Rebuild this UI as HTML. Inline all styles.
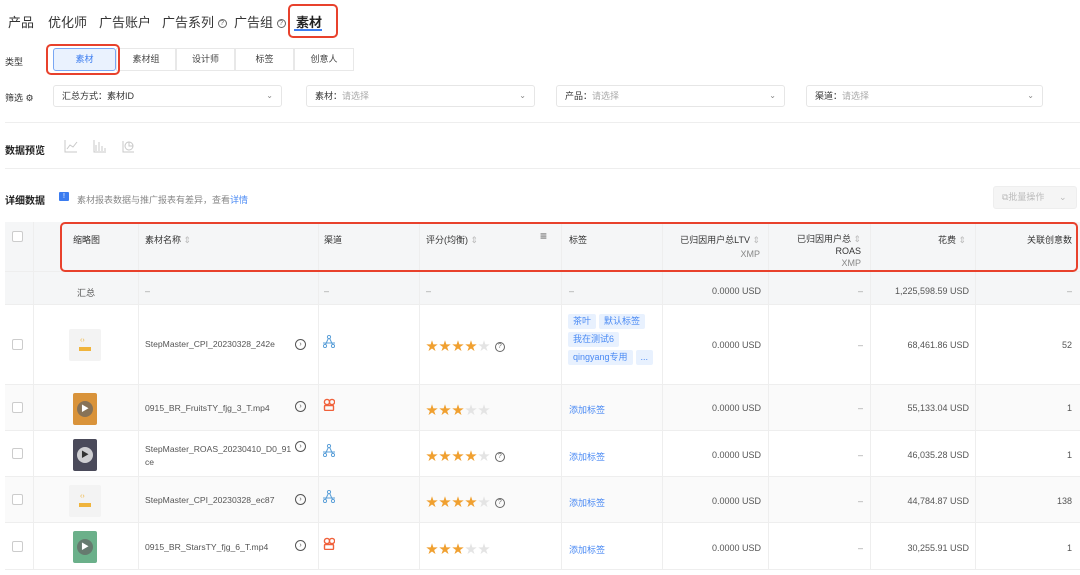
<!DOCTYPE html>
<html><head><meta charset="utf-8"><style>
*{box-sizing:border-box;margin:0;padding:0}
body{width:1080px;height:575px;overflow:hidden;background:#fff;font-family:"Liberation Sans","Noto Sans CJK SC",sans-serif;color:#333;position:relative;font-size:9px}
.a{position:absolute}
.tab{position:absolute;top:12px;font-size:13px;color:#333}
.red{position:absolute;border:2.5px solid #e8412c;border-radius:5px}
.seg{position:absolute;top:48px;height:23px;border:1px solid #e8e8e8;font-size:9px;color:#444;text-align:center;line-height:21px;background:#fff}
.sel{position:absolute;top:85px;height:22px;border:1px solid #e6e6e6;border-radius:3px;font-size:9px;line-height:20px;padding-left:8px;color:#333}
.sel .ph{color:#aaa}
.sel i{position:absolute;right:8px;top:0;font-style:normal;color:#888;font-size:8px}
.hr{position:absolute;left:5px;right:0;height:1px;background:#eee}
.row{position:absolute;left:5px;right:0;border-bottom:1px solid #eee}
.vl{position:absolute;top:222px;height:348px;width:1px;background:#eee}
.cb{position:absolute;left:12px;width:11px;height:11px;border:1px solid #ccc;border-radius:2px;background:#fff}
.t{position:absolute;font-size:9px;color:#555}
.r{text-align:right}
.th{position:absolute;top:233px;font-size:9px;color:#333}
.tag{display:inline-block;background:#e8f1fe;color:#4a8af4;font-size:9px;padding:2px 5px;border-radius:2px;margin:0 3px 3px 0}
.star{color:#f0a030;font-size:12px;letter-spacing:1px}
.star b{color:#e4e4e4;font-weight:normal}
.q{display:inline-block;width:10px;height:10px;border:1px solid #666;border-radius:50%;font-size:7px;line-height:8px;text-align:center;color:#666;vertical-align:middle}
.arr{position:absolute;left:295px;width:11px;height:11px;border:1px solid #555;border-radius:50%;font-size:7px;line-height:9px;text-align:center;color:#555}
.th2{position:absolute;left:69px;width:32px;height:32px;border-radius:2px}
.link{color:#4a8af4}
.nm{font-size:8.6px}
</style></head><body>
<svg width="0" height="0" style="position:absolute"><defs>
<g id="ap"><circle cx="6" cy="2" r="1.6" fill="none" stroke="#5a9fd8" stroke-width="1"/><circle cx="2" cy="11" r="1.6" fill="none" stroke="#5a9fd8" stroke-width="1"/><circle cx="10" cy="11" r="1.6" fill="none" stroke="#5a9fd8" stroke-width="1"/><path d="M5.3 3.5L2.5 9.5M6.7 3.5L9.5 9.5M0 8h12" stroke="#5a9fd8" stroke-width="1" fill="none"/></g>
<g id="tt"><circle cx="4" cy="4" r="2.6" fill="none" stroke="#f0603a" stroke-width="1.4"/><circle cx="9" cy="4" r="2.6" fill="none" stroke="#f0603a" stroke-width="1.4"/><rect x="1.5" y="7.5" width="9" height="5" rx="1" fill="none" stroke="#f0603a" stroke-width="1.4"/></g>
</defs></svg>
<div class="tab" style="left:8px">产品</div>
<div class="tab" style="left:48px">优化师</div>
<div class="tab" style="left:99px">广告账户</div>
<div class="tab" style="left:162px">广告系列 <span class="q" style="width:9px;height:9px">?</span></div>
<div class="tab" style="left:234px">广告组 <span class="q" style="width:9px;height:9px">?</span></div>
<div class="tab" style="left:296px;font-weight:bold;color:#222">素材</div>
<div class="a" style="left:294px;top:29px;width:28px;height:2px;background:#3b7cf0"></div>
<div class="red" style="left:288px;top:4px;width:50px;height:34px"></div>

<div class="t" style="left:5px;top:55px;color:#333">类型</div>
<div class="seg" style="left:53px;width:63px;background:#eaf2fe;border-color:#7aa7f3;color:#3b7cf0;border-radius:3px">素材</div>
<div class="seg" style="left:116px;width:60px">素材组</div>
<div class="seg" style="left:176px;width:59px">设计师</div>
<div class="seg" style="left:235px;width:59px">标签</div>
<div class="seg" style="left:294px;width:60px">创意人</div>
<div class="red" style="left:46px;top:44px;width:74px;height:31px"></div>

<div class="t" style="left:5px;top:91px;color:#333">筛选 ⚙</div>
<div class="sel" style="left:53px;width:229px">汇总方式：素材ID<i>⌄</i></div>
<div class="sel" style="left:306px;width:229px">素材：<span class="ph">请选择</span><i>⌄</i></div>
<div class="sel" style="left:556px;width:229px">产品：<span class="ph">请选择</span><i>⌄</i></div>
<div class="sel" style="left:806px;width:237px">渠道：<span class="ph">请选择</span><i>⌄</i></div>
<div class="hr" style="top:122px"></div>
<div class="a" style="left:5px;top:142px;font-size:10px;font-weight:bold;color:#222">数据预览</div>
<svg class="a" style="left:64px;top:139px" width="75" height="14" fill="none" stroke="#c8c8c8" stroke-width="1">
<path d="M1 1v12h12M3 10l3-4 3 2 4-5"/>
<path d="M30 1v12h12M32 12V6M35 12V3M38 12V7M41 12V9"/>
<path d="M59 2v11h11"/><circle cx="65" cy="7" r="4"/><path d="M65 3v4h4"/>
</svg>
<div class="hr" style="top:168px"></div>
<div class="a" style="left:5px;top:192px;font-size:10px;font-weight:bold;color:#222">详细数据</div>
<div class="a" style="left:59px;top:192px;width:10px;height:9px;background:#3b7cf0;border-radius:1px;color:#fff;font-size:7px;text-align:center;line-height:9px">!</div>
<div class="t" style="left:77px;top:193px;color:#888">素材报表数据与推广报表有差异，查看<span class="link">详情</span></div>
<div class="a" style="left:993px;top:186px;width:84px;height:23px;background:#f5f5f5;border:1px solid #eee;border-radius:3px;color:#bbb;font-size:9px;line-height:21px;padding-left:8px">⧉批量操作 <span style="margin-left:12px">⌄</span></div>

<div class="row" style="top:222px;height:50px;background:#f5f6f7"></div>
<div class="row" style="top:272px;height:33px;background:#f5f6f7"></div>
<div class="row" style="top:305px;height:80px"></div>
<div class="row" style="top:385px;height:46px;background:#fafafa"></div>
<div class="row" style="top:431px;height:46px"></div>
<div class="row" style="top:477px;height:46px;background:#fafafa"></div>
<div class="row" style="top:523px;height:47px"></div>
<div class="vl" style="left:33px"></div><div class="vl" style="left:138px"></div><div class="vl" style="left:318px"></div><div class="vl" style="left:419px"></div><div class="vl" style="left:561px"></div><div class="vl" style="left:662px"></div><div class="vl" style="left:768px"></div><div class="vl" style="left:870px"></div><div class="vl" style="left:975px"></div>

<div class="cb" style="top:231px"></div>
<div class="th" style="left:73px">缩略图</div>
<div class="th" style="left:145px">素材名称 <span style="color:#bbb">⇕</span></div>
<div class="th" style="left:324px">渠道</div>
<div class="th" style="left:426px">评分(均衡) <span style="color:#bbb">⇕</span></div>
<div class="th" style="left:540px;font-size:12px;top:229px;color:#555">≡</div>
<div class="th" style="left:569px">标签</div>
<div class="th r" style="left:662px;width:98px">已归因用户总LTV <span style="color:#bbb">⇕</span><br><span style="color:#888;line-height:17px">XMP</span></div>
<div class="th r" style="left:768px;width:93px;line-height:12px">已归因用户总 <span style="color:#bbb">⇕</span><br>ROAS<br><span style="color:#888">XMP</span></div>
<div class="th r" style="left:870px;width:96px">花费 <span style="color:#bbb">⇕</span></div>
<div class="th r" style="left:975px;width:97px">关联创意数</div>
<div class="red" style="left:60px;top:222px;width:1018px;height:50px"></div>

<div class="t" style="left:77px;top:286px">汇总</div>
<div class="t" style="left:145px;top:286px;color:#999">–</div><div class="t" style="left:324px;top:286px;color:#999">–</div><div class="t" style="left:426px;top:286px;color:#999">–</div><div class="t" style="left:569px;top:286px;color:#999">–</div>
<div class="t r" style="left:662px;width:99px;top:286px">0.0000 USD</div>
<div class="t r" style="left:768px;width:95px;top:286px;color:#999">–</div>
<div class="t r" style="left:870px;width:99px;top:286px">1,225,598.59 USD</div>
<div class="t r" style="left:975px;width:97px;top:286px;color:#999">–</div>

<!-- row1 -->
<div class="cb" style="top:339px"></div>
<div class="th2" style="top:329px;background:#f3f3f3"><div class="a" style="left:10px;top:18px;width:12px;height:4px;background:#f0b43c"></div><div class="a" style="left:11px;top:8px;color:#f0b43c;font-size:7px">‹›</div></div>
<div class="t nm" style="left:145px;top:339px">StepMaster_CPI_20230328_242e</div><div class="arr" style="top:339px">›</div>
<svg class="a" style="left:323px;top:335px" width="12" height="13"><use href="#ap"/></svg>
<div class="t star" style="left:426px;top:337px">★★★★<b>★</b> <span class="q">?</span></div>
<div class="a" style="left:568px;top:314px;width:92px;line-height:11px"><span class="tag">茶叶</span><span class="tag">默认标签</span><span class="tag">我在测试6</span><span class="tag">qingyang专用</span><span class="tag">...</span></div>
<div class="t r" style="left:662px;width:99px;top:340px">0.0000 USD</div>
<div class="t r" style="left:768px;width:95px;top:340px;color:#999">–</div>
<div class="t r" style="left:870px;width:99px;top:340px">68,461.86 USD</div>
<div class="t r" style="left:975px;width:97px;top:340px">52</div>
<!-- row2 -->
<div class="cb" style="top:402px"></div>
<div class="th2" style="top:393px;left:73px;width:24px;background:#d9933a"><div class="a" style="left:4px;top:8px;width:16px;height:16px;border-radius:50%;background:rgba(100,100,100,.7);color:#fff;font-size:8px;text-align:center;line-height:16px">▶</div></div>
<div class="t nm" style="left:145px;top:403px">0915_BR_FruitsTY_fjg_3_T.mp4</div><div class="arr" style="top:401px">›</div>
<svg class="a" style="left:323px;top:398px" width="12" height="13"><use href="#tt"/></svg>
<div class="t star" style="left:426px;top:401px">★★★<b>★★</b></div>
<div class="t link" style="left:569px;top:403px">添加标签</div>
<div class="t r" style="left:662px;width:99px;top:403px">0.0000 USD</div>
<div class="t r" style="left:768px;width:95px;top:403px;color:#999">–</div>
<div class="t r" style="left:870px;width:99px;top:403px">55,133.04 USD</div>
<div class="t r" style="left:975px;width:97px;top:403px">1</div>
<!-- row3 -->
<div class="cb" style="top:448px"></div>
<div class="th2" style="top:439px;left:73px;width:24px;background:#4a4a5a"><div class="a" style="left:4px;top:8px;width:16px;height:16px;border-radius:50%;background:rgba(240,240,240,.8);color:#333;font-size:8px;text-align:center;line-height:16px">▶</div></div>
<div class="t nm" style="left:145px;top:443px;line-height:13px;width:148px;word-break:break-all">StepMaster_ROAS_20230410_D0_91ce</div><div class="arr" style="top:441px">›</div>
<svg class="a" style="left:323px;top:444px" width="12" height="13"><use href="#ap"/></svg>
<div class="t star" style="left:426px;top:447px">★★★★<b>★</b> <span class="q">?</span></div>
<div class="t link" style="left:569px;top:450px">添加标签</div>
<div class="t r" style="left:662px;width:99px;top:450px">0.0000 USD</div>
<div class="t r" style="left:768px;width:95px;top:450px;color:#999">–</div>
<div class="t r" style="left:870px;width:99px;top:450px">46,035.28 USD</div>
<div class="t r" style="left:975px;width:97px;top:450px">1</div>
<!-- row4 -->
<div class="cb" style="top:494px"></div>
<div class="th2" style="top:485px;background:#f3f3f3"><div class="a" style="left:10px;top:18px;width:12px;height:4px;background:#f0b43c"></div><div class="a" style="left:11px;top:8px;color:#f0b43c;font-size:7px">‹›</div></div>
<div class="t nm" style="left:145px;top:495px">StepMaster_CPI_20230328_ec87</div><div class="arr" style="top:494px">›</div>
<svg class="a" style="left:323px;top:490px" width="12" height="13"><use href="#ap"/></svg>
<div class="t star" style="left:426px;top:493px">★★★★<b>★</b> <span class="q">?</span></div>
<div class="t link" style="left:569px;top:496px">添加标签</div>
<div class="t r" style="left:662px;width:99px;top:496px">0.0000 USD</div>
<div class="t r" style="left:768px;width:95px;top:496px;color:#999">–</div>
<div class="t r" style="left:870px;width:99px;top:496px">44,784.87 USD</div>
<div class="t r" style="left:975px;width:97px;top:496px">138</div>
<!-- row5 -->
<div class="cb" style="top:541px"></div>
<div class="th2" style="top:531px;left:73px;width:24px;background:#6bb08a"><div class="a" style="left:4px;top:8px;width:16px;height:16px;border-radius:50%;background:rgba(100,100,100,.7);color:#fff;font-size:8px;text-align:center;line-height:16px">▶</div></div>
<div class="t nm" style="left:145px;top:542px">0915_BR_StarsTY_fjg_6_T.mp4</div><div class="arr" style="top:540px">›</div>
<svg class="a" style="left:323px;top:537px" width="12" height="13"><use href="#tt"/></svg>
<div class="t star" style="left:426px;top:540px">★★★<b>★★</b></div>
<div class="t link" style="left:569px;top:543px">添加标签</div>
<div class="t r" style="left:662px;width:99px;top:543px">0.0000 USD</div>
<div class="t r" style="left:768px;width:95px;top:543px;color:#999">–</div>
<div class="t r" style="left:870px;width:99px;top:543px">30,255.91 USD</div>
<div class="t r" style="left:975px;width:97px;top:543px">1</div>
</body></html>
